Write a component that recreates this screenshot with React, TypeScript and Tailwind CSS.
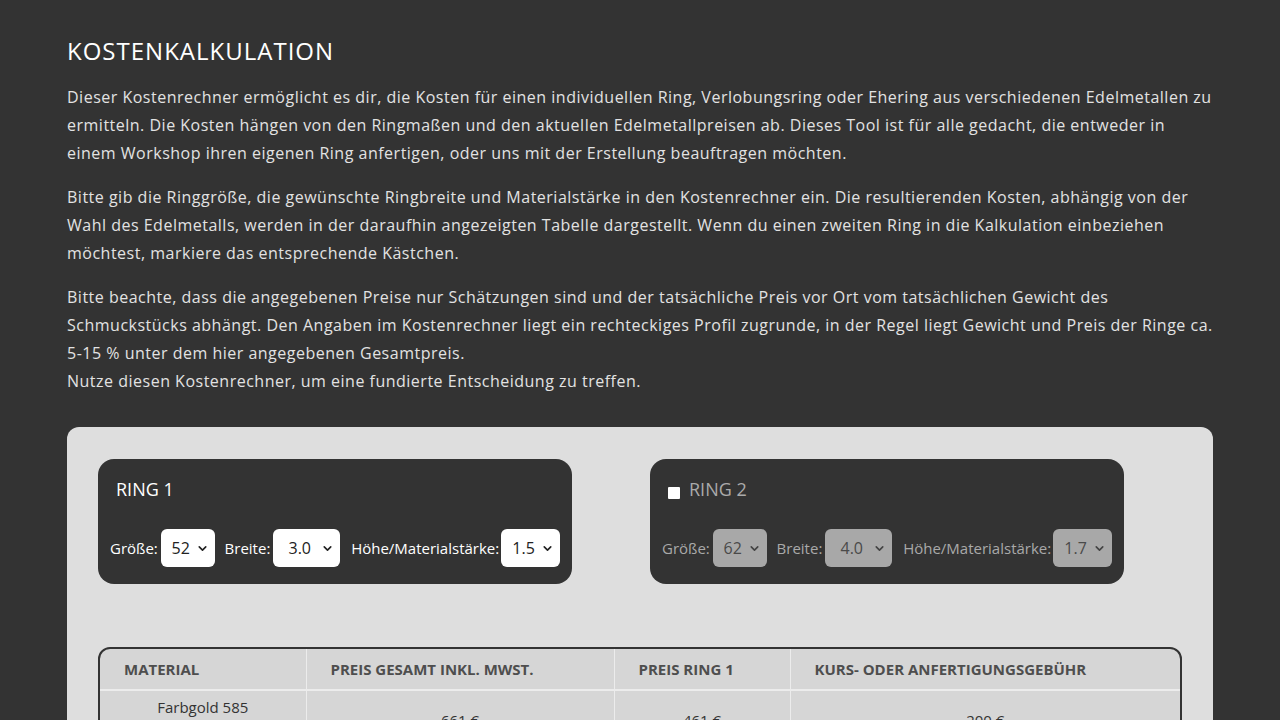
import { ChevronDown } from "lucide-react"

type SelectProps = {
  value: string
  options: string[]
  width: string
  disabled?: boolean
}

function RingSelect({ value, options, width, disabled }: SelectProps) {
  return (
    <div className={`relative h-[38px] ${width}`}>
      <select
        defaultValue={value}
        disabled={disabled}
        className={`h-full w-full appearance-none rounded-[6px] pl-[2px] pr-[16px] text-center [text-align-last:center] text-[16px] outline-none ${
          disabled ? "bg-[#a8a8a8] text-[#4a4a4a]" : "bg-white text-[#222]"
        }`}
      >
        {options.map((o) => (
          <option key={o}>{o}</option>
        ))}
      </select>
      <ChevronDown
        size={13}
        strokeWidth={3}
        className={`pointer-events-none absolute right-[6px] top-[13px] ${disabled ? "text-[#444]" : "text-[#222]"}`}
      />
    </div>
  )
}

function RingBox({ title, values, disabled }: { title: string; values: string[]; disabled?: boolean }) {
  const label = disabled ? "text-[#a9a9a9]" : "text-white"
  return (
    <div className="w-[474px] h-[125px] rounded-[16px] bg-[#333333] px-[12px] pt-[19px]">
      <div className="flex items-center h-[22px] pl-[6px]">
        {disabled && <input type="checkbox" className="mr-[9px] mt-[7px] h-[12px] w-[12px] appearance-none rounded-[1px] bg-white" />}
        <span className={`text-[18px] font-medium ${disabled ? "text-[#aaaaaa]" : "text-white"}`}>{title}</span>
      </div>
      <div className={`mt-[29px] flex items-center text-[15px] ${label}`}>
        <span className="mr-[3px]">Größe:</span>
        <RingSelect value={values[0]} options={["48", "50", "52", "54", "56", "58", "60", "62", "64"]} width="w-[54px]" disabled={disabled} />
        <span className="ml-[10px] mr-[3px]">Breite:</span>
        <RingSelect value={values[1]} options={["2.0", "2.5", "3.0", "3.5", "4.0", "4.5", "5.0"]} width="w-[67px]" disabled={disabled} />
        <span className="ml-[11px] mr-[2px]">Höhe/Materialstärke:</span>
        <RingSelect value={values[2]} options={["1.3", "1.5", "1.7", "2.0"]} width="w-[59px]" disabled={disabled} />
      </div>
    </div>
  )
}

const rows = [
  { material: "Farbgold 585", sub: "(Gelb-, Rot- oder Weißgold)", total: "661 €", ring: "461 €", fee: "200 €" },
  { material: "Farbgold 750", sub: "(Gelb-, Rot- oder Weißgold)", total: "838 €", ring: "638 €", fee: "200 €" },
  { material: "Platin 950", sub: "", total: "812 €", ring: "612 €", fee: "200 €" },
]

export default function App() {
  return (
    <div
      className="min-h-screen bg-[#333333] text-[#e2e2e2]"
      style={{ fontFamily: '"Open Sans", "Noto Sans", sans-serif' }}
    >
      <div className="mx-auto w-[1146px] pt-[35px] pb-[40px]">
        <h1 className="text-[24px] leading-[32px] font-medium tracking-[1px] text-white">KOSTENKALKULATION</h1>

        <div className="mt-[16px] space-y-[16px] text-[16px] leading-[28px] tracking-[0.5px]">
          <p>
            Dieser Kostenrechner ermöglicht es dir, die Kosten für einen individuellen Ring, Verlobungsring oder Ehering aus verschiedenen Edelmetallen zu
            ermitteln. Die Kosten hängen von den Ringmaßen und den aktuellen Edelmetallpreisen ab. Dieses Tool ist für alle gedacht, die entweder in
            einem Workshop ihren eigenen Ring anfertigen, oder uns mit der Erstellung beauftragen möchten.
          </p>
          <p>
            Bitte gib die Ringgröße, die gewünschte Ringbreite und Materialstärke in den Kostenrechner ein. Die resultierenden Kosten, abhängig von der
            Wahl des Edelmetalls, werden in der daraufhin angezeigten Tabelle dargestellt. Wenn du einen zweiten Ring in die Kalkulation einbeziehen
            möchtest, markiere das entsprechende Kästchen.
          </p>
          <p>
            Bitte beachte, dass die angegebenen Preise nur Schätzungen sind und der tatsächliche Preis vor Ort vom tatsächlichen Gewicht des
            Schmuckstücks abhängt. Den Angaben im Kostenrechner liegt ein rechteckiges Profil zugrunde, in der Regel liegt Gewicht und Preis der Ringe ca.
            5-15 % unter dem hier angegebenen Gesamtpreis.
            <br />
            Nutze diesen Kostenrechner, um eine fundierte Entscheidung zu treffen.
          </p>
        </div>

        <div className="mt-[32px] rounded-[12px] bg-[#dedede] px-[31px] pt-[32px] pb-[40px]">
          <div className="flex gap-[78px]">
            <RingBox title="RING 1" values={["52", "3.0", "1.5"]} />
            <RingBox title="RING 2" values={["62", "4.0", "1.7"]} disabled />
          </div>

          <div className="mt-[63px] w-[1084px] overflow-hidden rounded-[12px] border-2 border-[#333333] bg-[#d6d6d6]">
            <table className="w-full border-collapse text-[#4e4e4e]">
              <thead>
                <tr className="h-[41px] text-left text-[15px] font-semibold">
                  <th className="w-[206px] pl-[24px] border-r border-[#ececec]">MATERIAL</th>
                  <th className="w-[308px] pl-[24px] border-r border-[#ececec]">PREIS GESAMT INKL. MWST.</th>
                  <th className="w-[176px] pl-[24px] border-r border-[#ececec]">PREIS RING 1</th>
                  <th className="pl-[24px]">KURS- ODER ANFERTIGUNGSGEBÜHR</th>
                </tr>
              </thead>
              <tbody className="text-[15px] text-[#333]">
                {rows.map((r) => (
                  <tr key={r.material} className="border-t-2 border-[#ececec]">
                    <td className="border-r border-[#ececec] px-[10px] pt-[5px] pb-[10px] text-center leading-[22px]">
                      <div>{r.material}</div>
                      {r.sub && <div className="text-[13px] text-[#555]">{r.sub}</div>}
                    </td>
                    <td className="border-r border-[#ececec] text-center">{r.total}</td>
                    <td className="border-r border-[#ececec] text-center">{r.ring}</td>
                    <td className="text-center">{r.fee}</td>
                  </tr>
                ))}
              </tbody>
            </table>
          </div>
        </div>
      </div>
    </div>
  )
}
